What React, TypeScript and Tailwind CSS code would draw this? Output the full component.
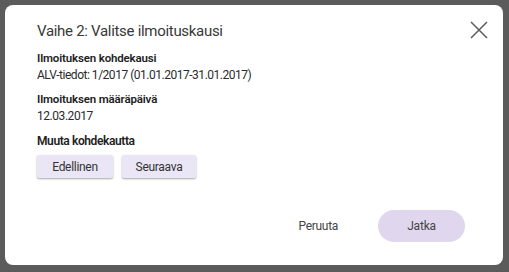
export default function App() {
	return (
		<div
			className="flex h-[272px] w-[509px] bg-[#5b5b5b] p-[5px] pr-[6px] pb-[7px]"
			style={{ fontFamily: "Roboto, 'Noto Sans', sans-serif" }}
		>
			<div className="flex flex-1 flex-col rounded-lg bg-white pl-[32px] pr-[15px]">
				<div className="flex items-start justify-between pt-[14px]">
					<h1 className="text-[15px] leading-[24px] tracking-[-0.3px] text-[#383838]">
						Vaihe 2: Valitse ilmoituskausi
					</h1>
					<svg
						className="mt-[2px] h-[18px] w-[18px] text-[#5a5a5a]"
						viewBox="0 0 18 18"
						fill="none"
						stroke="currentColor"
						strokeWidth={1.5}
					>
						<path d="M1 1L17 17M17 1L1 17" />
					</svg>
				</div>
				<div className="mt-[7px] text-[#222]">
					<p className="text-[11.5px] font-semibold leading-[16px] tracking-[-0.15px]">
						Ilmoituksen kohdekausi
					</p>
					<p className="text-[12px] leading-[18px] tracking-[-0.48px] text-[#2a2a2a]">
						ALV-tiedot: 1/2017 (01.01.2017-31.01.2017)
					</p>
					<p className="mt-[7px] text-[11.5px] font-semibold leading-[16px] tracking-[-0.15px]">
						Ilmoituksen määräpäivä
					</p>
					<p className="text-[12px] leading-[18px] tracking-[-0.45px] text-[#2a2a2a]">
						12.03.2017
					</p>
					<p className="mt-[6px] text-[12px] font-semibold leading-[20px] tracking-[-0.4px]">
						Muuta kohdekautta
					</p>
				</div>
				<div className="mt-[4px] flex gap-[9px]">
					<button className="h-[23px] w-[76px] rounded-[2px] bg-[#ebe6f5] text-[12px] tracking-[-0.3px] text-[#333] shadow-[0_1px_2px_rgba(0,0,0,0.35)]">
						Edellinen
					</button>
					<button className="h-[23px] w-[74px] rounded-[2px] bg-[#ebe6f5] text-[12px] tracking-[-0.3px] text-[#333] shadow-[0_1px_2px_rgba(0,0,0,0.35)]">
						Seuraava
					</button>
				</div>
				<div className="mt-auto mb-[23px] flex items-center justify-end gap-[40px] pr-[23px]">
					<span className="text-[12px] tracking-[-0.3px] text-[#444]">Peruuta</span>
					<button className="h-[32px] w-[87px] rounded-full bg-[#e0d6ee] text-[12px] tracking-[-0.2px] text-[#444]">
						Jatka
					</button>
				</div>
			</div>
		</div>
	);
}
